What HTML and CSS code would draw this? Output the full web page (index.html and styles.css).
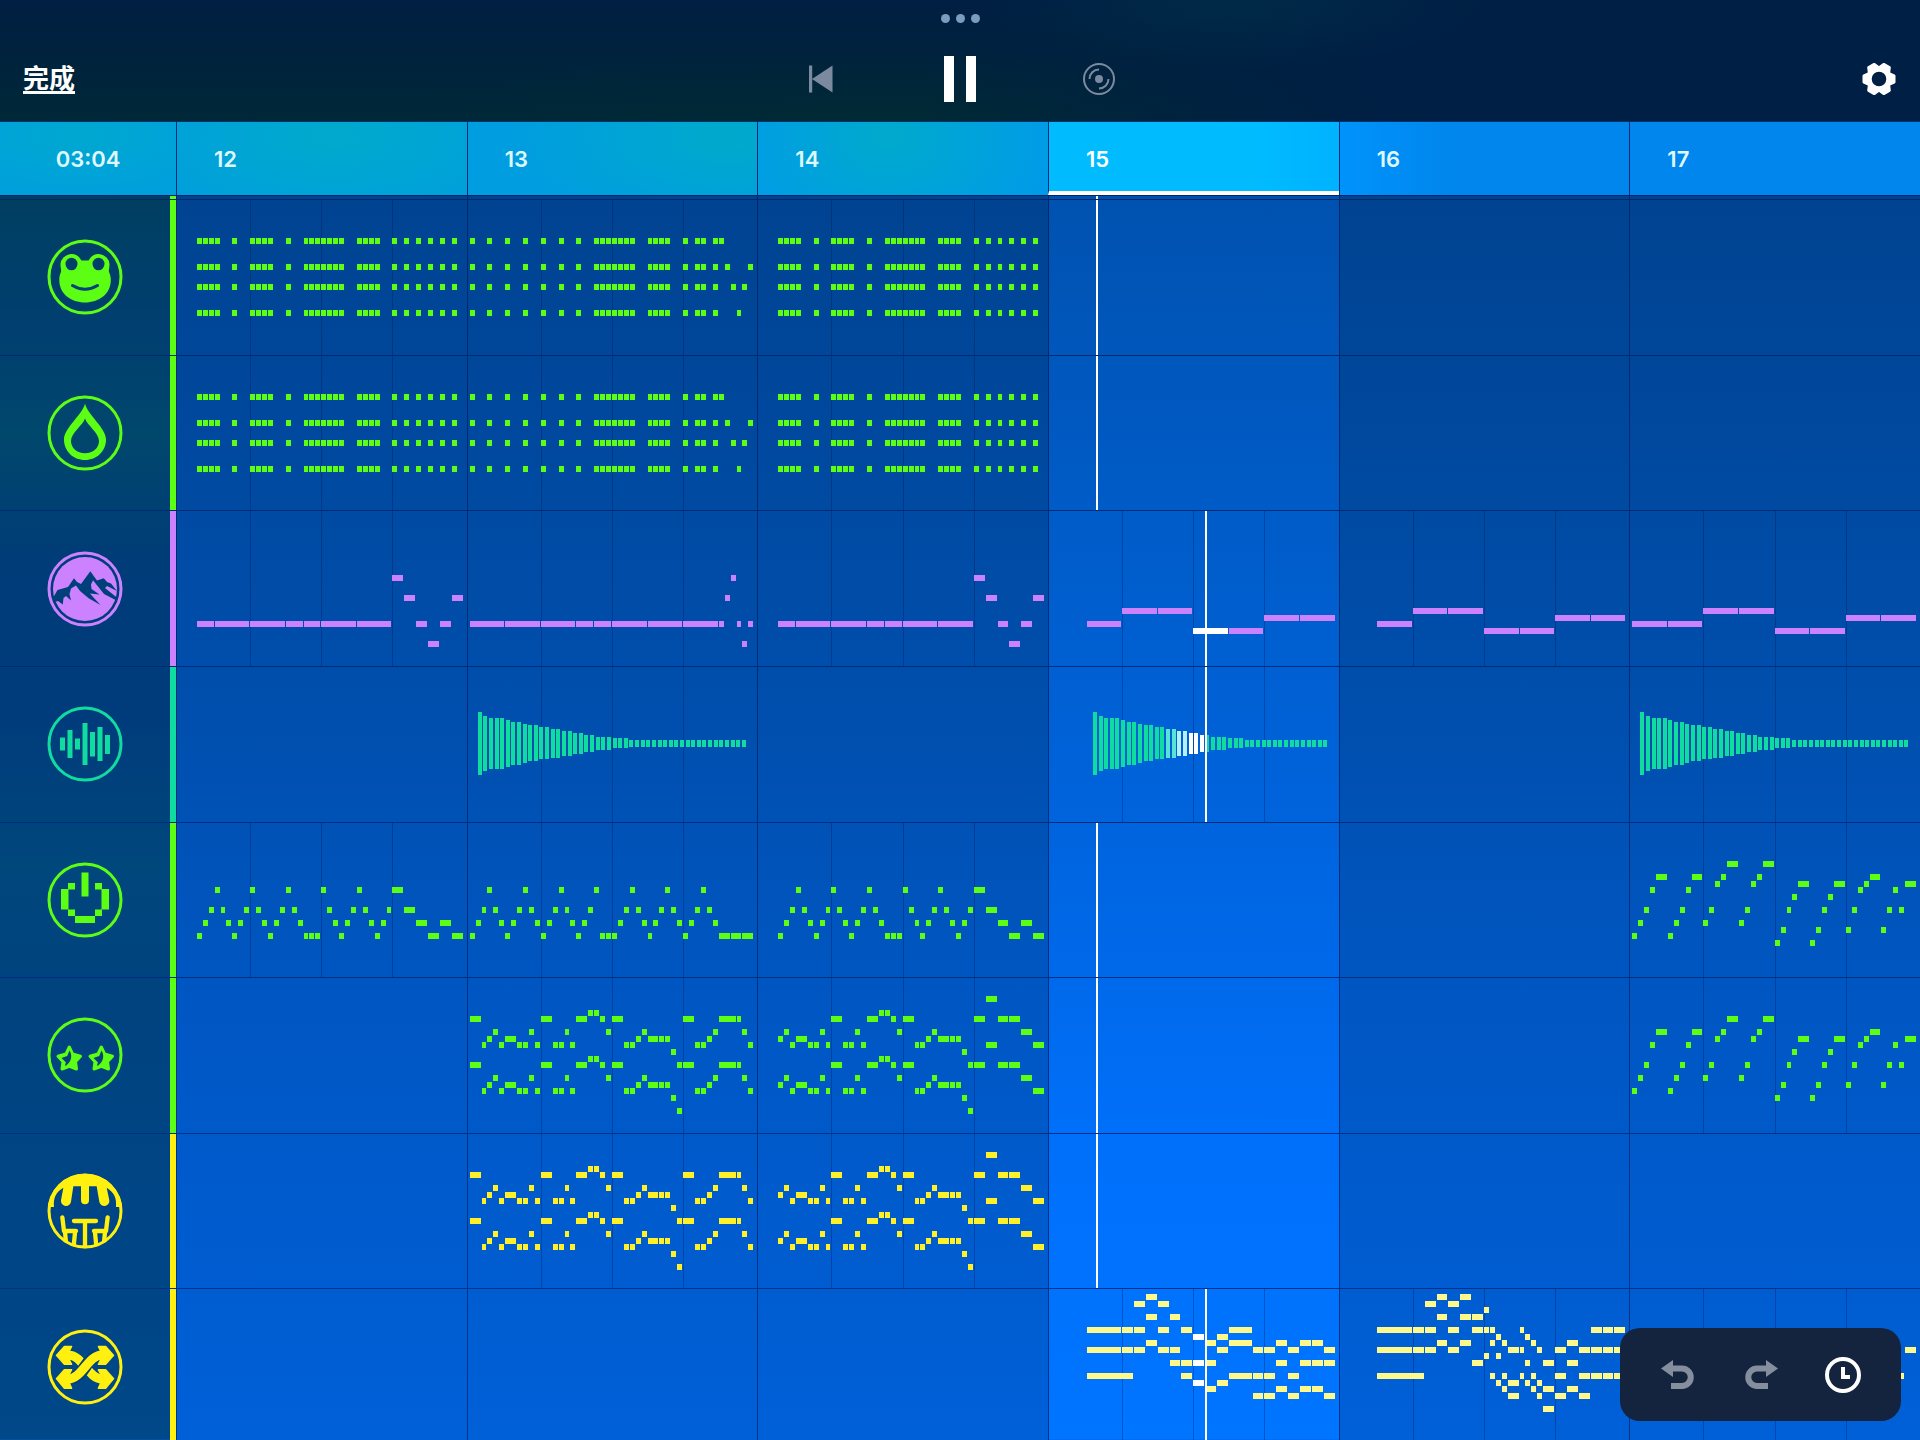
FILE: index.html
```html
<!DOCTYPE html>
<html lang="zh">
<head>
<meta charset="utf-8">
<title>Sequencer</title>
<meta name="viewport" content="width=device-width, initial-scale=1">
<link rel="stylesheet" href="styles.css">
</head>
<body>
<header class="topbar">
  <div class="grabber" aria-hidden="true"><span></span><span></span><span></span></div>
  <div class="topbar-row">
    <a class="done" href="#">完成</a>
    <div class="transport">
      <button class="icon-btn muted" aria-label="Back to start">
        <svg width="34" height="34" viewBox="0 0 34 34"><path d="M5 3.500h3.200v27H5zM8 17 28.500 3.500v27z" fill="currentColor"/></svg>
      </button>
      <button class="icon-btn" aria-label="Pause">
        <svg width="48" height="48" viewBox="0 0 48 48"><path d="M8 1h10v46H8zM30 1h10v46H30z" fill="currentColor"/></svg>
      </button>
      <button class="icon-btn muted" aria-label="Loop record">
        <svg width="34" height="34" viewBox="0 0 34 34" fill="none" stroke="currentColor" stroke-width="2"><circle cx="17" cy="17" r="15"/><circle cx="17" cy="17" r="4" fill="currentColor" stroke="none"/><path d="M7.500 17A9.500 9.500 0 0 1 17 7.500M26.500 17A9.500 9.500 0 0 1 17 26.500"/></svg>
      </button>
    </div>
    <button class="icon-btn settings" aria-label="Settings">
      <svg width="36" height="36" viewBox="-18 -18 36 36"><path fill-rule="evenodd" stroke="currentColor" stroke-width="3" stroke-linejoin="round" fill="currentColor" d="M15-3.200V3.200L9.600 5.500 10.300 11.400 4.700 14.600 0 11-4.700 14.600-10.300 11.400-9.600 5.500-15 3.200V-3.200L-9.600-5.500-10.300-11.400-4.700-14.600 0-11 4.700-14.600 10.300-11.400 9.600-5.500zM8.800 0A8.800 8.800 0 1 0-8.800 0 8.800 8.800 0 1 0 8.800 0z"/></svg>
    </button>
  </div>
</header>

<div class="ruler">
  <div class="clock">03:04</div>
  <div class="bars">
    <div class="bar glow-a">12</div>
    <div class="bar glow-b">13</div>
    <div class="bar glow-c">14</div>
    <div class="bar now">15</div>
    <div class="bar next">16</div>
    <div class="bar">17</div>
  </div>
</div>

<main class="tracks">
  <div class="track lead green"><div class="side"></div><div class="lane" data-track="lead"></div></div>

  <section class="track green">
    <div class="side"><button class="icon-btn" aria-label="Frog">
      <svg class="badge" viewBox="0 0 76 76"><circle class="ring" cx="38" cy="38" r="36"/>
        <path class="fill" fill-rule="evenodd" d="M13.500 25A11 11 0 0 1 34.500 21.500H41.500A11 11 0 0 1 62.500 25C62.500 29 61.500 31 62 33C63.300 36 63.800 38 63.800 41C63.800 55 52 63.500 38 63.500S12.300 55 12.300 41C12.300 38 12.700 36 14 33C14.500 31 13.500 29 13.500 25zM18.500 25a6 6.300 0 1 0 12 0 6 6.300 0 1 0-12 0zM45.500 25a6 6.300 0 1 0 12 0 6 6.300 0 1 0-12 0z"/>
        <path class="cut-line" d="M25.500 46.500Q38 54 50.500 46.500"/></svg>
    </button></div>
    <div class="lane" data-track="frog"></div>
  </section>

  <section class="track green">
    <div class="side"><button class="icon-btn" aria-label="Drop">
      <svg class="badge" viewBox="0 0 76 76"><circle class="ring" cx="38" cy="38" r="36"/>
        <path class="fill" fill-rule="evenodd" d="M38 8.500C40 19 59 33 59 44.500 59 56 50 65 38 65S17 56 17 44.500C17 33 36 19 38 8.500zM38 23.500C40 30 52 38 52 46 52 53 46 58.300 38 58.300S24 53 24 46C24 38 36 30 38 23.500z"/></svg>
    </button></div>
    <div class="lane" data-track="drop"></div>
  </section>

  <section class="track violet">
    <div class="side"><button class="icon-btn" aria-label="Mountain">
      <svg class="badge" viewBox="0 0 76 76"><circle class="ring" cx="38" cy="38" r="36"/><circle class="fill" cx="38" cy="38" r="32"/>
        <path class="cut" d="M6.500 46 10.500 39 21 36 27 27.300 30 31 34 33 43.300 20.300 50 29.500 56.800 27.300 60 31 64 32.500 70 40 60 35 58 37 69.800 46.500 69 49.300 57 43 46 29.300 44 33.500 44.500 38 52.500 43.500 43 42.500 46.500 46.500 53.500 54 42 47.500 33 40 29 34.500 24 37.500 22.500 43 24 49.500 19 45 16.500 47 15.800 53.500 11 50 8 51z"/></svg>
    </button></div>
    <div class="lane" data-track="mountain"></div>
  </section>

  <section class="track teal">
    <div class="side"><button class="icon-btn" aria-label="Audio">
      <svg class="badge" viewBox="0 0 76 76"><circle class="ring" cx="38" cy="38" r="36"/>
        <path class="bars-line" d="M15.500 31.500V44.500M23 24V52M30.500 32.500V43.500M38 17V59M45.500 26V50.500M53 21V55M60.500 29V48"/></svg>
    </button></div>
    <div class="lane" data-track="audio"></div>
  </section>

  <section class="track green">
    <div class="side"><button class="icon-btn" aria-label="Power">
      <svg class="badge" viewBox="0 0 76 76"><circle class="ring" cx="38" cy="38" r="36"/>
        <path class="fill" d="M34.500 10.500h7v24h-7zM21 21h7v6.500h-7zM48 21h7v6.500h-7zM14 27h7.500v20.500H14zM54.500 27H62v20.500h-7.500zM21 47.500h7V54h-7zM48 47.500h7V54h-7zM28 54h20v7H28z"/></svg>
    </button></div>
    <div class="lane" data-track="power"></div>
  </section>

  <section class="track green">
    <div class="side"><button class="icon-btn" aria-label="Stars">
      <svg class="badge" viewBox="0 0 76 76"><circle class="ring" cx="38" cy="38" r="36"/>
        <g id="star"><path class="fill soft" d="M22.300 30 25.600 37 33.500 39.300 28.500 44.700 29.500 52 22.300 49.300 15 52 16 44.700 11 39.300 19 37z"/>
        <path class="cut" d="M22.500 33.500 20.200 39 14.500 41 18.800 45.200 18 49C23 46.500 26.500 40 22.500 33.500z"/></g>
        <use href="#star" x="32"/></svg>
    </button></div>
    <div class="lane" data-track="stars"></div>
  </section>

  <section class="track yellow">
    <div class="side"><button class="icon-btn" aria-label="Terrace">
      <svg class="badge" viewBox="139 640 228 228"><clipPath id="disc"><circle cx="253" cy="754" r="112"/></clipPath>
        <circle cx="253" cy="754" r="108" fill="none" stroke="currentColor" stroke-width="9"/>
        <g clip-path="url(#disc)"><path class="fill" d="M139 640H367V742H346C348 715 342 700 318 684L326 722A15 15 0 0 1 296 726L288 680H265V722A12 12 0 0 1 241 722V680H218L211 726A15 15 0 0 1 181 722L188 684C166 698 158 712 160 742H139z"/>
        <g fill="none" stroke="currentColor" stroke-width="13" stroke-linecap="round" stroke-linejoin="round"><path d="M220 784H286M253 784V864" /><path d="M185 773 190 814H226M193 816 196 850M223 818 219 860"/><path d="M321 773 316 814H280M313 816 310 850M283 818 287 860"/></g></g></svg>
    </button></div>
    <div class="lane" data-track="terrace"></div>
  </section>

  <section class="track yellow pale">
    <div class="side"><button class="icon-btn" aria-label="Shuffle">
      <svg class="badge" viewBox="139 1106 228 228"><circle cx="253" cy="1220" r="108" fill="none" stroke="currentColor" stroke-width="9"/>
        <g class="fill soft-wide"><path d="M167 1185 191 1158H213L207 1170V1200L213 1212H191zM339 1185 315 1158H293L299 1170V1200L293 1212H315zM167 1255 191 1228H213L207 1240V1270L213 1284H191zM339 1255 315 1228H293L299 1240V1270L293 1284H315z"/></g>
        <path d="M202 1185C244 1181 262 1256 304 1256" fill="none" stroke="currentColor" stroke-width="27"/>
        <path class="cut-wide" d="M216 1254C252 1244 254 1196 290 1186"/>
        <path d="M202 1256C244 1256 262 1184 304 1184" fill="none" stroke="currentColor" stroke-width="27"/></svg>
    </button></div>
    <div class="lane" data-track="shuffle"></div>
  </section>
</main>

<div class="dock">
  <button class="icon-btn" aria-label="Undo">
    <svg width="36" height="32" viewBox="0 0 36 32"><path d="M12 9.500H22A8.500 8.500 0 0 1 22 27H11" fill="none" stroke="currentColor" stroke-width="6"/><path d="M1 9.500 13 1V18z" fill="currentColor"/></svg>
  </button>
  <button class="icon-btn" aria-label="Redo">
    <svg width="36" height="32" viewBox="0 0 36 32"><path d="M24 9.500H14A8.500 8.500 0 0 0 14 27H25" fill="none" stroke="currentColor" stroke-width="6"/><path d="M35 9.500 23 1V18z" fill="currentColor"/></svg>
  </button>
  <button class="icon-btn lit" aria-label="History">
    <svg width="36" height="36" viewBox="0 0 36 36" fill="none" stroke="currentColor"><circle cx="18" cy="18" r="16" stroke-width="4"/><path d="M18 10V20H25" stroke-width="4"/></svg>
  </button>
</div>
<script src="tracks.js"></script>
</body>
</html>
```

FILE: styles.css
```css
* { box-sizing: border-box; }

:root {
  --side-w: 176px;
  --line: rgba(0, 22, 84, .6);
  --cut: #00407a;
}

body {
  margin: 0;
  height: 100vh;
  overflow: hidden;
  display: flex;
  flex-direction: column;
  background: #004a9c;
  color: #fff;
  font-family: Inter, "Noto Sans CJK SC", sans-serif;
}

.icon-btn {
  display: flex;
  padding: 0;
  border: 0;
  background: none;
  color: inherit;
}
.icon-btn svg { display: block; }
.muted { color: #7c8aa0; }

/* Top bar */
.topbar {
  flex: none;
  height: 122px;
  padding: 14px 23px 0;
  display: flex;
  flex-direction: column;
  border-bottom: 1px solid #00326a;
  background:
    radial-gradient(ellipse 260px 70px at 64% 0, rgba(0, 54, 76, .5), transparent),
    linear-gradient(90deg, transparent 48%, #001f44 72%),
    radial-gradient(ellipse 500px 70px at 46% 100%, rgba(0, 44, 48, .4), transparent),
    linear-gradient(#001e42, #002838);
}
.grabber {
  flex: none;
  display: flex;
  justify-content: center;
  gap: 6px;
}
.grabber span {
  width: 9px;
  height: 9px;
  border-radius: 50%;
  background: #7d9bbf;
}
.topbar-row {
  flex: none;
  padding-top: 32px;
  display: grid;
  grid-template-columns: 1fr auto 1fr;
  align-items: center;
}
.done {
  justify-self: start;
  color: #fff;
  font-size: 26px;
  line-height: 32px;
  font-weight: 600;
  text-decoration-thickness: 3px;
  text-underline-offset: 3px;
}
.transport {
  display: flex;
  align-items: center;
  gap: 98px;
}
.settings { justify-self: end; }

/* Bar ruler */
.ruler {
  flex: none;
  height: 73px;
  display: grid;
  grid-template-columns: var(--side-w) 1fr;
  font-size: 22px;
  line-height: 28px;
  font-weight: 600;
  color: #dff8ff;
}
.clock {
  display: flex;
  align-items: center;
  justify-content: center;
  background: radial-gradient(ellipse 150px 60px at 45% 20%, #00a8d0, #00a0dc);
}
.bars {
  display: grid;
  grid-template-columns: repeat(6, 1fr);
}
.bar {
  padding-left: 37px;
  display: flex;
  align-items: center;
  border-left: 1px solid #002c74;
  background: #0086ec;
}
.glow-a { background: radial-gradient(ellipse 210px 90px at 54% 20%, #00aacc, #009fdc); }
.glow-b { background: radial-gradient(ellipse 220px 100px at 90% 20%, #00aacb, #009de0); }
.glow-c { background: radial-gradient(ellipse 180px 140px at 45% 20%, #00aacc, #009aea); }
.now {
  border-bottom: 4px solid #fff;
  padding-top: 4px;
  background: linear-gradient(90deg, #00bcff 70%, #00b2ff);
  color: #fff;
}
.next { background: linear-gradient(90deg, #0093fc, #0086ec 40%); }

/* Tracks */
.tracks {
  flex: 1;
  margin-bottom: -4px;
  display: grid;
  grid-template-rows: 4px repeat(8, 1fr);
  background: linear-gradient(#004391, #004fae 42%, #0057c4 66%, #0060d8);
}
.track {
  min-height: 0;
  display: grid;
  grid-template-columns: var(--side-w) 1fr;
  border-top: 1px solid var(--line);
}
.side {
  display: flex;
  align-items: center;
  padding-left: 47px;
  border-right: 6px solid currentColor;
  background: linear-gradient(#003f62 14%, #003f70 23%, #00476c 30%, #003c78 39%, #003c7c 50%, #00477c 60%, #00437f 69%, #004586 86%, #004888) fixed;
}
.green { color: #5cff14; }
.violet { color: #cc82ff; }
.teal { color: #10dca0; }
.yellow { color: #fff010; }

.badge { width: 76px; height: 76px; }
.ring { fill: none; stroke: currentColor; stroke-width: 3; }
.fill { fill: currentColor; }
.soft { stroke: currentColor; stroke-width: 3; stroke-linejoin: round; }
.soft-wide { stroke: currentColor; stroke-width: 4; stroke-linejoin: round; }
.bars-line { stroke: currentColor; stroke-width: 5; }
.cut { fill: var(--cut); }
.cut-line { fill: none; stroke: var(--cut); stroke-width: 3; stroke-linecap: round; }
.cut-wide { fill: none; stroke: var(--cut); stroke-width: 37; }

.lane {
  position: relative;
  min-height: 0;
  display: grid;
  grid-template-columns: repeat(6, 1fr);
}
.cell { border-left: 1px solid var(--line); }
.cell.playing {
  background: linear-gradient(#0052b0 14%, #005bc6 34%, #0064de 58%, #0070fb 80%, #0075ff) fixed;
  background-clip: padding-box;
}
.notes {
  position: absolute;
  inset: 0;
  width: 100%;
  height: 100%;
  fill: currentColor;
  shape-rendering: crispEdges;
}
.pale .notes { color: #fff98c; }
.yellow:not(.pale) .notes { color: #fff02a; }
.notes .beat { fill: rgba(0, 22, 84, .32); }
.notes .hot { fill: #fff; }
.notes .warm { fill: #b4f0ff; }
.notes .tint { fill: #58e4d4; }

/* Floating dock */
.dock {
  position: absolute;
  right: 19px;
  bottom: 19px;
  width: 281px;
  height: 93px;
  padding: 0 40px;
  display: flex;
  align-items: center;
  justify-content: space-between;
  border-radius: 20px;
  background: #14243f;
  color: #858e9d;
}
.lit { color: #fff; }
```

FILE: tracks.js
```js
// Each bar holds 48 steps (12 per beat). A note is written "step" or "step+length";
// a trailing "!" marks a note that is sounding. Keys are rows of the pitch grid.
const NS = 'http://www.w3.org/2000/svg';
const BARS = 6, NOW = 3, WIDTH = 1744, HEIGHT = 155;
const BAR_W = WIDTH / BARS, STEP = 5.93, LEFT = 3, ROW = 6.57, TOP = 5.3;

const run = '3 4 5 6 9 12 13 14 15 18 21 22 23 24 25 26 27 30 31 32 33 36 38 40 42 44 46';
const chords = { 5: run, 9: run, 12: run, 16: run };
const head = '0 3 6 9 12 15 18 21 22 23 24 25 26 27 30 31 32 33 36 38 39 41 ';
const chordsB = { 5: head + '42', 9: head + '43 47', 12: head + '44 46', 16: head + '45' };

const bass = { 9: '36+2', 12: '38+2 46+2', 16: '3+3 6+6 12+6 18+3 21+3 24+6 30+6 40+2 44+2', 19: '42+2' };
const bassB = { 9: '44', 12: '43', 16: '0+6 6+6 12+6 18+3 21+3 24+6 30+6 36+6 42 45 47', 19: '46' };
const steps = (first, sounding) => ({
  14: '12+6 18+6', 15: '36+6 42+6', 16: first, 17: `24+6${sounding} 30+6`
});

const arp = {
  9: '6 12 18 24 30 36+2',
  12: '5 7 11 13 17 19 25 29 31 35 38+2',
  14: '4 8 10 14 16 20 26 28 32 34 40+2 44+2',
  16: '3 9 15 21 22 23 27 33 42+2 46+2'
};
const arpB = {
  9: '3 9 15 21 27 33 39',
  12: '2 4 8 10 14 16 20 26 28 32 34 38 40',
  14: '1 5 7 11 13 17 19 25 29 31 35 37 41',
  16: '0 6 12 18 22 23 24 30 36 42+2 44+2 46+2'
};
const rise = {
  5: '16+2 22+2', 7: '4+2 10+2 15 21 40+2', 8: '14 20 28+2 34+2 39 46+2', 9: '3 9 38 44',
  10: '27 33', 12: '2 8 13 19 26 32 37 43 45', 14: '1 7 12 18', 15: '25 31 36 42',
  16: '0 6', 17: '24 30'
};

// Doubles a melody seven rows lower.
const doubled = (voice, extra) => {
  const out = {};
  const add = (row, text) => { out[row] = out[row] ? out[row] + ' ' + text : text; };
  for (const [row, text] of Object.entries(voice)) { add(+row, text); add(+row + 7, text); }
  for (const [row, text] of Object.entries(extra)) add(+row, text);
  return out;
};
const tune = doubled({
  4: '20 21', 5: '0+2 12+2 18+2 22 24+2 36+2 42+3 45', 7: '4 10 16 23 29 41 46',
  8: '3 6+2 28 30+2 32 33 40', 9: '2 5 8 9 11 14 15 17 26 27 38 39 47', 10: '34'
}, { 12: '35', 19: '35' });
const tuneB = doubled({
  2: '38+2', 4: '20 21', 5: '12+2 18+2 22 24+2 36+2 40+2 42+2', 7: '4 10 16 23 29 44+2',
  8: '3 6+2 28 30+2 32 33', 9: '5 8 9 11 14 15 17 26 27 46+2', 10: '34'
}, { 12: '35', 19: '35' });

const shuffleA = {
  0: '16+2', 1: '14+2 18+2', 3: '16+2 20+2', 5: '6+6 12+2 14+2 18+2 22+2 30+4',
  6: '24+2! 28+2', 7: '16+2 26+2 30+4 38+2 42+2 44+2',
  8: '6+6 12+2 14+2 18+2 20+2 28+2 34+2 36+2 40+2 46+2',
  10: '20+2 22+2 24+2! 26+2 38+2 42+2 44+2 46+2', 12: '6+8 22+2 30+4 34+2 36+2 40+2',
  13: '24+2! 28+2', 14: '26+2 38+2 42+2 44+2', 15: '34+2 36+2 40+2 46+2'
};
const shuffleB = {
  0: '16+2 20+2', 1: '14+2 18+2', 2: '24', 3: '16+2 20+2 22+2',
  5: '6+6 12+2 14+2 18+2 22+2 24 25 30 42+2 44+2 46+2', 6: '26 31',
  7: '16+2 20+2 25 27 32 38+2', 8: '6+6 12+2 14+2 18+2 28+2 30 33 36+2 40+2 42+2 44+2 46+2',
  9: '24 26', 10: '22+2 31 34+2 38+2', 12: '6+8 25 27 30 32 36+2 40+2 42+2 44+2 46+2',
  13: '26 28+2 31 33', 14: '27 32 34+2 38+2', 15: '28+2 33 36+2 40+2', 17: '34+2'
};
const shuffleC = { 8: '46+2', 12: '44+2' };

const EARLY = 920, LATE = 1029;
const TRACKS = {
  lead: { clips: {}, playhead: EARLY },
  frog: { clips: { 0: chords, 1: chordsB, 2: chords }, playhead: EARLY },
  drop: { clips: { 0: chords, 1: chordsB, 2: chords }, playhead: EARLY },
  mountain: {
    clips: { 0: bass, 1: bassB, 2: bass, 3: steps('6+6', '!'), 4: steps('6+6', ''), 5: steps('0+6 6+6', '') },
    playhead: LATE
  },
  audio: { clips: { 1: 'wave', 3: 'wave', 5: 'wave' }, playhead: LATE },
  power: { clips: { 0: arp, 1: arpB, 2: arp, 5: rise }, playhead: EARLY },
  stars: { clips: { 1: tune, 2: tuneB, 5: rise }, playhead: EARLY },
  terrace: { clips: { 1: tune, 2: tuneB }, playhead: EARLY },
  shuffle: { clips: { 3: shuffleA, 4: shuffleB, 5: shuffleC }, playhead: LATE }
};

const WAVE = [63, 55, 51, 51, 51, 47, 43, 43, 39, 36, 36, 32, 32, 29, 29, 25, 25, 21, 21, 17, 17, 13, 13, 13, 10, 10, 10];

function rect(svg, x, y, w, h, cls) {
  const r = document.createElementNS(NS, 'rect');
  r.setAttribute('x', x);
  r.setAttribute('y', y);
  r.setAttribute('width', w);
  r.setAttribute('height', h);
  if (cls) r.setAttribute('class', cls);
  svg.appendChild(r);
}

function drawNotes(svg, bar, clip) {
  const x0 = bar * BAR_W + LEFT;
  for (const [row, text] of Object.entries(clip)) {
    for (const note of text.split(' ')) {
      const [step, len] = note.replace('!', '').split('+').map(Number);
      const x = Math.round(x0 + step * STEP);
      const end = Math.round(x0 + (step + (len || 1)) * STEP);
      rect(svg, x, Math.round(TOP + row * ROW), end - x - 1, 6, note.endsWith('!') ? 'hot' : '');
    }
  }
}

function drawWave(svg, bar) {
  const playing = bar === NOW;
  const x0 = bar * BAR_W + (playing ? 45 : 11);
  const count = playing ? 42 : 48;
  for (let i = 0; i < count; i++) {
    const h = WAVE[i] || 7;
    let cls = '';
    if (playing && i > 12 && i < 20) cls = i < 15 ? 'tint' : i < 17 ? 'warm' : 'hot';
    rect(svg, Math.round(x0 + i * 5.62), Math.round(76 - h / 2), 4, h, cls);
  }
}

for (const lane of document.querySelectorAll('.lane')) {
  const track = TRACKS[lane.dataset.track];
  for (let bar = 0; bar < BARS; bar++) {
    const cell = document.createElement('div');
    cell.className = bar === NOW ? 'cell playing' : 'cell';
    lane.appendChild(cell);
  }
  const svg = document.createElementNS(NS, 'svg');
  svg.setAttribute('class', 'notes');
  svg.setAttribute('viewBox', `0 0 ${WIDTH} ${HEIGHT}`);
  svg.setAttribute('preserveAspectRatio', 'none');
  for (const [bar, clip] of Object.entries(track.clips)) {
    for (let beat = 1; beat < 4; beat++) {
      rect(svg, Math.round(bar * BAR_W + LEFT + beat * 12 * STEP), 0, 1, HEIGHT, 'beat');
    }
    if (clip === 'wave') drawWave(svg, +bar);
    else drawNotes(svg, +bar, clip);
  }
  rect(svg, track.playhead, 0, 2, HEIGHT, 'hot');
  lane.appendChild(svg);
}
```
